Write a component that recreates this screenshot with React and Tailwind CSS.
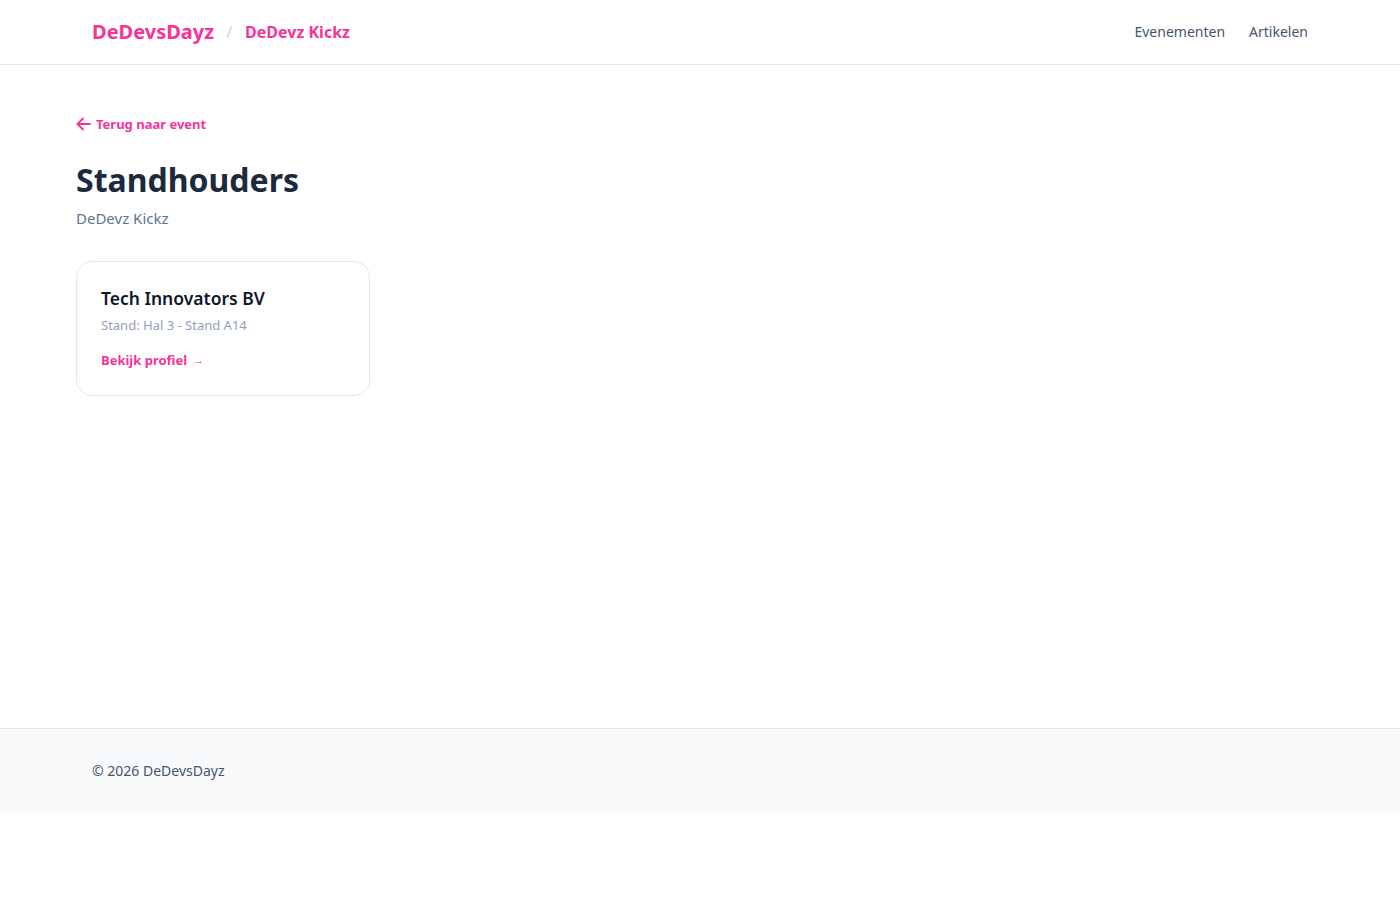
import React from 'react';

const exhibitors = [
  { id: 1, name: 'Tech Innovators BV', stand: 'Hal 3 - Stand A14' },
];

const ArrowLeftIcon = () => (
  <svg width="15" height="14" viewBox="0 0 15 14" fill="none" stroke="currentColor" strokeWidth="1.8" strokeLinecap="round" strokeLinejoin="round">
    <path d="M14 7H1.5" />
    <path d="M7 1.5 1.5 7 7 12.5" />
  </svg>
);

const ExhibitorCard = ({ exhibitor }) => (
  <div className="rounded-2xl border border-slate-200 bg-white px-6 pt-6 pb-[25px]">
    <h3 className="text-[17.5px] font-semibold leading-6 text-slate-900">{exhibitor.name}</h3>
    <p className="mt-[5px] text-[13px] leading-5 text-slate-400">Stand: {exhibitor.stand}</p>
    <a href="#" className="mt-[15px] flex w-fit items-center gap-1.5 text-[13px] font-bold leading-5 text-pink-500">
      Bekijk profiel <span className="text-[11px]">→</span>
    </a>
  </div>
);

const App = () => {
  return (
    <div className="bg-white" style={{ fontFamily: '"Noto Sans", "Open Sans", sans-serif' }}>
      <header className="h-[65px] border-b border-slate-200 bg-white">
        <div className="mx-auto flex h-16 max-w-7xl items-center justify-between px-8">
          <div className="flex items-center gap-3">
            <a href="#" className="text-xl font-bold text-pink-500">DeDevsDayz</a>
            <span className="text-slate-300">/</span>
            <a href="#" className="ml-px text-base font-bold text-pink-500">DeDevz Kickz</a>
          </div>
          <nav className="flex items-center gap-6 text-sm text-slate-600">
            <a href="#">Evenementen</a>
            <a href="#">Artikelen</a>
          </nav>
        </div>
      </header>

      <main className="mx-auto min-h-[663px] max-w-7xl px-4 py-12">
        <a href="#" className="flex w-fit items-center gap-[5px] text-[13px] font-bold leading-[22px] text-pink-500">
          <ArrowLeftIcon />
          Terug naar event
        </a>
        <h1 className="mt-[25px] text-[32px] font-bold leading-10 text-slate-800">Standhouders</h1>
        <p className="mt-1.5 text-[15px] leading-6 text-slate-500">DeDevz Kickz</p>

        <div className="mt-[31px] grid grid-cols-4 gap-6">
          {exhibitors.map((exhibitor) => (
            <ExhibitorCard key={exhibitor.id} exhibitor={exhibitor} />
          ))}
        </div>
      </main>

      <footer className="border-t border-slate-200 bg-slate-50">
        <div className="mx-auto max-w-7xl px-8 py-8">
          <p className="text-sm leading-5 text-slate-600">© 2026 DeDevsDayz</p>
        </div>
      </footer>
    </div>
  );
};

export default App;
